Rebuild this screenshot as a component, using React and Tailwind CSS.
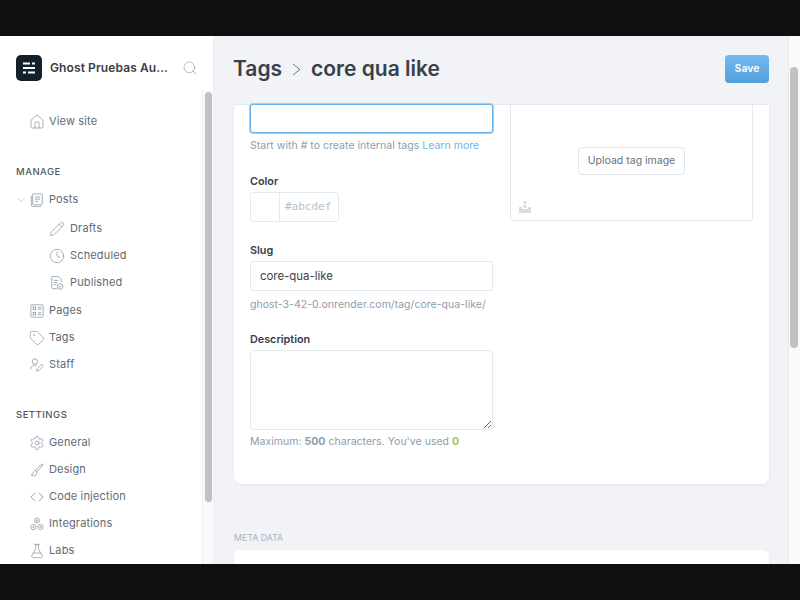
import React from 'react';
import { Search, House, Pencil, Clock, ChevronDown, Tag, Settings, FlaskConical } from 'lucide-react';

const iconClass = 'w-[14px] h-[14px] shrink-0 text-[#7c8b9a]';
const lucideClass = 'w-[16px] h-[16px] -mx-[1px] shrink-0 text-[#7c8b9a]';

function Svg({ children }) {
  return (
    <svg viewBox="0 0 16 16" fill="none" stroke="currentColor" strokeWidth="0.8" className={iconClass}>
      {children}
    </svg>
  );
}

const PostsIcon = () => (
  <Svg>
    <rect x="3" y="1" width="11" height="12.5" rx="1" />
    <path d="M1.5 3v11a1.5 1.5 0 0 0 1.5 1.5h10M5.5 4.5h6M5.5 7h6M5.5 9.5h4" />
  </Svg>
);

const PublishedIcon = () => (
  <Svg>
    <path d="M8 14.5H3a1 1 0 0 1-1-1v-12a1 1 0 0 1 1-1h6.5L13 4v3M4.5 5h5M4.5 7.5h4M4.5 10h2.5" />
    <circle cx="11.5" cy="12" r="3.2" />
    <path d="M10 12l1.2 1 1.8-2" />
  </Svg>
);

const PagesIcon = () => (
  <Svg>
    <rect x="1" y="1" width="14" height="14" rx="1" />
    <rect x="3.5" y="3.5" width="3" height="3" />
    <rect x="3.5" y="9.5" width="3" height="3" />
    <path d="M9 4h4M9 6h4M9 10h4M9 12h4" />
  </Svg>
);

const StaffIcon = () => (
  <Svg>
    <circle cx="5.5" cy="4" r="3" />
    <path d="M0.8 13c0-3 2-5 4.7-5 1 0 1.8.2 2.5.7M7.5 15l.6-2.6 5.2-5.2 2 2-5.2 5.2z" />
  </Svg>
);

const DesignIcon = () => (
  <Svg>
    <path d="M15 1c-1.5.3-7 4.500-8.600 7.600l1.500 1.300C10.800 8 14.600 2.600 15 1z" />
    <path d="M6.200 9c-2 0-2.400 1.600-2.800 3-.3 1-1 1.600-2 2 2 1 5.600 1 6.300-2 .2-1 .1-1.700-.2-2.100" />
  </Svg>
);

const CodeIcon = () => (
  <svg viewBox="0 0 16 16" fill="none" stroke="currentColor" strokeWidth="0.9" className={iconClass}>
    <path d="M6 3L1 8l5 5M10 3l5 5-5 5" />
  </svg>
);

const IntegrationsIcon = () => (
  <Svg>
    <circle cx="8" cy="4" r="2.8" />
    <circle cx="4" cy="11.5" r="3" />
    <circle cx="12" cy="11.5" r="3" />
    <circle cx="8" cy="4" r="0.8" />
    <circle cx="4" cy="11.5" r="0.8" />
    <circle cx="12" cy="11.5" r="0.8" />
  </Svg>
);

const lucideProps = { strokeWidth: 1, className: lucideClass };

const Row = ({ icon, label, chevron }) => (
  <div className="relative h-[27px] flex items-center pl-[30px] gap-[5px] text-[11px] tracking-[0.15px] text-[#5f6b75]">
    {chevron && <ChevronDown strokeWidth={1} className="absolute left-[15px] top-[8px] w-[12px] h-[12px] text-[#9aa5b0]" />}
    {icon}
    <span>{label}</span>
  </div>
);

const SubRow = ({ icon, label }) => (
  <div className="h-[27px] flex items-center pl-[50px] gap-[6px] text-[11px] tracking-[0.15px] text-[#5f6b75]">
    {icon}
    <span>{label}</span>
  </div>
);

const SectionLabel = ({ children }) => (
  <div className="h-[14px] flex items-center pl-[16px] text-[9.5px] font-medium tracking-[0.5px] text-[#4d5862]">{children}</div>
);

function Sidebar() {
  return (
    <aside className="w-[214px] shrink-0 flex flex-col bg-white border-r border-[#eef0f3] h-full">
      <div className="h-[54px] pt-[19px] pl-[16px] pr-[15px] flex items-start shrink-0">
        <div className="w-[26px] h-[26px] rounded-[5px] bg-[#15212a] flex items-center justify-center shrink-0">
          <svg viewBox="0 0 14 14" className="w-[14px] h-[14px]" fill="#fff">
            <rect x="1" y="1.5" width="7" height="2" />
            <rect x="10" y="1.5" width="3" height="2" />
            <rect x="1" y="6" width="12" height="2" />
            <rect x="1" y="10.5" width="3" height="2" />
            <rect x="6" y="10.5" width="7" height="2" />
          </svg>
        </div>
        <div className="ml-[8px] h-[26px] flex items-center text-[12px] font-semibold text-[#394047] whitespace-nowrap tracking-[0.1px]">Ghost Pruebas Au...</div>
        <div className="ml-auto h-[26px] flex items-center">
          <Search strokeWidth={1} className="w-[16px] h-[16px] text-[#8e9cac]" />
        </div>
      </div>
      <div className="flex-1 flex min-h-0">
        <nav className="flex-1 pt-[18px] overflow-hidden">
          <Row icon={<House {...lucideProps} />} label="View site" />
          <div className="mt-[30px]"><SectionLabel>MANAGE</SectionLabel></div>
          <div className="mt-[7px]"><Row chevron icon={<PostsIcon />} label="Posts" /></div>
          <div className="mt-[2px] mb-[1px]">
            <SubRow icon={<Pencil {...lucideProps} />} label="Drafts" />
            <SubRow icon={<Clock {...lucideProps} />} label="Scheduled" />
            <SubRow icon={<PublishedIcon />} label="Published" />
          </div>
          <Row icon={<PagesIcon />} label="Pages" />
          <Row icon={<Tag {...lucideProps} />} label="Tags" />
          <Row icon={<StaffIcon />} label="Staff" />
          <div className="mt-[30px]"><SectionLabel>SETTINGS</SectionLabel></div>
          <div className="mt-[7px]">
            <Row icon={<Settings {...lucideProps} />} label="General" />
            <Row icon={<DesignIcon />} label="Design" />
            <Row icon={<CodeIcon />} label="Code injection" />
            <Row icon={<IntegrationsIcon />} label="Integrations" />
            <Row icon={<FlaskConical {...lucideProps} />} label="Labs" />
          </div>
        </nav>
        <div className="w-[11px] shrink-0 bg-[#fafafa] border-l border-[#f0f0f0] pt-[2px] pl-[2px]">
          <div className="w-[7px] h-[410px] rounded-full bg-[#c1c1c1]"></div>
        </div>
      </div>
    </aside>
  );
}

const Label = ({ children }) => (
  <div className="h-[14px] flex items-center text-[10.8px] font-semibold text-[#394047]">{children}</div>
);

const Hint = ({ children }) => (
  <div className="h-[14px] flex items-center text-[10.5px] tracking-[0.03px] text-[#8e9cac] whitespace-pre">{children}</div>
);

function TagForm() {
  return (
    <div className="flex gap-[17px] px-[16px] -mt-[1px]">
      <div className="w-[243px]">
        <input readOnly className="block w-full h-[29px] bg-white rounded-[3px] border border-[#66b5ef] shadow-[0_0_0_1px_#9bd0f5]" />
        <div className="mt-[6px]"><Hint>Start with # to create internal tags <span className="text-[#6bb5ea]">Learn more</span></Hint></div>
        <div className="mt-[22px]"><Label>Color</Label></div>
        <div className="mt-[3px] w-[89px] h-[30px] rounded-[3px] border border-[#e4eaf0] flex">
          <div className="w-[29px] border-r border-[#e4eaf0]"></div>
          <div className="flex-1 pl-[5px] flex items-center text-[11px] text-[#b8c0c8]" style={{ fontFamily: '"DejaVu Sans Mono", monospace' }}>#abcdef</div>
        </div>
        <div className="mt-[22px]"><Label>Slug</Label></div>
        <input readOnly value="core-qua-like" className="block mt-[3px] w-full h-[30px] rounded-[3px] border border-[#e4eaf0] px-[9px] text-[11.4px] text-[#394047] outline-none" />
        <div className="mt-[7px]"><Hint>ghost-3-42-0.onrender.com/tag/core-qua-like/</Hint></div>
        <div className="mt-[21px]"><Label>Description</Label></div>
        <textarea readOnly className="block mt-[3px] w-full h-[80px] rounded-[3px] border border-[#e4eaf0] outline-none"></textarea>
        <div className="mt-[5px]"><Hint>Maximum: <b className="font-bold">500</b> characters. You've used <b className="font-bold text-[#a4c35a]">0</b></Hint></div>
      </div>
      <div className="w-[243px] h-[117px] rounded-b-[3px] border border-t-0 border-[#e4eaf0] relative flex items-center justify-center">
        <button className="h-[28px] mt-[-2px] w-[107px] rounded-[4px] bg-white border border-[#dfe5eb] text-[10.5px] text-[#66737f]">Upload tag image</button>
        <svg viewBox="0 0 12 12" className="absolute left-[8px] bottom-[7px] w-[12px] h-[12px]" fill="#dcdcdc">
          <rect x="4.5" y="0" width="3" height="3" />
          <path d="M0 6h3v2h6V6h3v6H0z" />
          <rect x="4.5" y="4" width="3" height="3" />
        </svg>
      </div>
    </div>
  );
}

export default function App() {
  return (
    <div className="w-[800px] h-[600px] overflow-hidden flex flex-col bg-[#0f0f0f]" style={{ fontFamily: 'Inter, "Liberation Sans", sans-serif' }}>
      <div className="h-[36px] shrink-0"></div>
      <div className="flex-1 flex min-h-0">
        <Sidebar />
        <main className="flex-1 min-w-0 bg-[#f1f3f7] pl-[20px] pr-[19px] overflow-hidden">
          <header className="h-[68px] flex items-start">
            <div className="h-[66px] -ml-[1px] flex items-center text-[21px] font-semibold text-[#394047]">
              <span>Tags</span>
              <svg viewBox="0 0 9 13" fill="none" stroke="currentColor" strokeWidth="1" className="w-[9px] h-[13px] mx-[10px] text-[#6b7680]">
                <path d="M1 1l7 5.500-7 5.500" />
              </svg>
              <span>core qua like</span>
            </div>
            <button className="ml-auto mt-[19px] w-[44px] h-[28px] rounded-[4px] bg-gradient-to-b from-[#74b9ef] to-[#519fde] text-white text-[10.5px] font-semibold">Save</button>
          </header>
          <section className="h-[380px] bg-white rounded-b-[8px] border-t border-[#e4e9ee] shadow-[0_1px_3px_rgba(0,0,0,0.06)]">
            <TagForm />
          </section>
          <div className="mt-[47px] h-[14px] flex items-center text-[8.8px] text-[#abb4be]">META DATA</div>
          <section className="mt-[5px] h-[60px] bg-white rounded-t-[6px] shadow-[0_1px_3px_rgba(0,0,0,0.06)]"></section>
        </main>
        <div className="w-[12px] shrink-0 bg-[#fafafa] border-l border-[#e8e8e8] pt-[31px] pl-[1px]">
          <div className="w-[8px] h-[281px] rounded-full bg-[#c1c1c1]"></div>
        </div>
      </div>
      <div className="h-[36px] shrink-0"></div>
    </div>
  );
}
